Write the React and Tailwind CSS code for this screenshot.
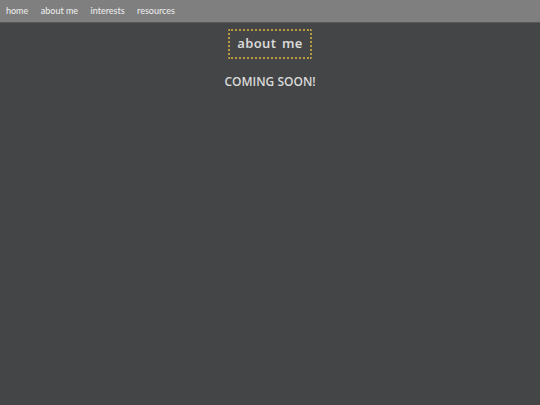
import React from 'react';

const links = ['home', 'about me', 'interests', 'resources'];

const App = () => {
  return (
    <div className="min-h-screen bg-[#444546] font-['Lato',sans-serif]">
      {/* Nav */}
      <nav className="flex h-[23px] items-center gap-[12.5px] border-b border-[#555657] bg-[#7f7f7f] pb-[1px] pl-[6px]">
        {links.map((link) => (
          <a key={link} className="text-[9px] leading-none text-[#f0f0f0]">
            {link}
          </a>
        ))}
      </nav>

      {/* Content */}
      <div className="flex flex-col items-center">
        <div className="mt-[6px] flex h-[30px] w-[84px] items-center justify-center rounded-[2px] border-2 border-dotted border-[#b89c3e] pb-[2px]">
          <h1 className="font-['Noto_Sans',sans-serif] text-[13px] font-semibold leading-none tracking-[0.35px] [word-spacing:2px] text-[#d8d8d8]">
            about me
          </h1>
        </div>
        <p className="mt-[14px] font-['Open_Sans',sans-serif] text-[12px] font-semibold leading-[18px] text-[#d9d9d9]">COMING SOON!</p>
      </div>
    </div>
  );
};

export default App;
